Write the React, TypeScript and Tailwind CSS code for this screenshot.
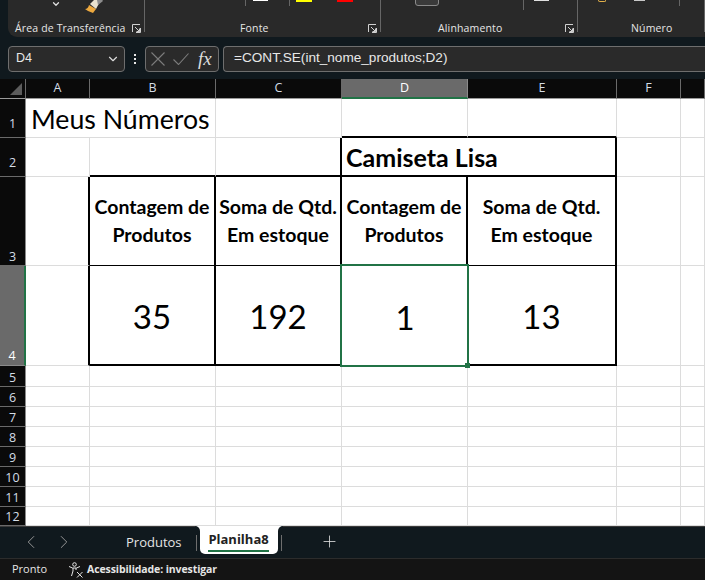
import React from "react";
import { ChevronDown, ChevronLeft, ChevronRight, Plus } from "lucide-react";

const ui = { fontFamily: '"Open Sans", "Noto Sans", sans-serif' };
const sheet = { fontFamily: 'Lato, "Open Sans", sans-serif' };

function Launcher({ className = "" }: { className?: string }) {
  return (
    <svg width="9" height="9" viewBox="0 0 9 9" fill="none" stroke="#d0d0d0" strokeWidth="1" className={className}>
      <path d="M0.5 8V0.5H8M8.5 4V8.5H4M3 3L7.5 7.5M7.5 4.5V7.5H4.5" />
    </svg>
  );
}

function Brush() {
  return (
    <svg width="20" height="14" viewBox="0 0 20 14" className="ml-[24px]">
      <path d="M5 4 L11 -2 L17 -2 L11 9 Z" fill="#e9e2cf" />
      <path d="M12 0 L16 -2 L18 1 L13 5 Z" fill="#8c8c8c" />
      <path d="M4 5 L11 9 L8 13 L3 11 L0 9 Q3 9 4 5 Z" fill="#eda93f" />
    </svg>
  );
}

function Group({
  w,
  label,
  ml,
  launcher,
  children,
}: {
  w: string;
  label: string;
  ml: string;
  launcher?: boolean;
  children?: React.ReactNode;
}) {
  return (
    <div className={`flex shrink-0 ${w}`}>
      <div className="flex flex-1 flex-col">
        <div className="flex h-[22px] items-start">{children}</div>
        <div className="flex h-[13px] items-center whitespace-nowrap text-[10.5px] tracking-[0.15px] text-[#e6e6e6]">
          <span className={ml}>{label}</span>
          {launcher && <Launcher className="ml-auto mr-[3px]" />}
        </div>
      </div>
      <div className="h-[32px] w-px bg-[#666666]" />
    </div>
  );
}

const base = "border-r border-b border-[#dcdcdc]";
const numCell = "flex items-center justify-center pt-[3px] text-[33px] text-black";
const headCell = "flex items-center justify-center text-center text-[19.5px] leading-[28px] font-bold text-black";

function ColHead({ t, active }: { t: string; active?: boolean }) {
  return (
    <div
      className={
        active
          ? "flex items-center justify-center border-r border-b-2 border-r-[#8a8a8a] border-b-[#217346] bg-[#6a6a6a] text-[12.5px] text-white"
          : "flex items-center justify-center border-r border-b border-r-[#6a6a6a] border-b-[#9a9a9a] bg-[#0a0a0a] text-[12.5px] text-[#d4dde6]"
      }
    >
      {t}
    </div>
  );
}

function RowHead({ t, pb, active }: { t: string; pb: string; active?: boolean }) {
  return (
    <div
      className={`flex items-end justify-center border-b text-[12.5px] leading-[16px] ${pb} ${
        active
          ? "border-r-2 border-r-[#217346] border-b-[#8a8a8a] bg-[#6a6a6a] text-white"
          : "border-r border-r-[#8a8a8a] border-b-[#6a6a6a] bg-[#0a0a0a] text-[#d4dde6]"
      }`}
    >
      {t}
    </div>
  );
}

const plainRows: [string, string][] = [
  ["5", "pb-0"],
  ["6", "pb-0"],
  ["7", "pb-0"],
  ["8", "pb-0"],
  ["9", "pb-0"],
  ["10", "pb-0"],
  ["11", "pb-0"],
  ["12", "pb-0"],
];

export default function App() {
  return (
    <div className="flex h-[580px] w-[705px] flex-col overflow-hidden bg-[#10191e]" style={ui}>
      {/* Ribbon */}
      <div className="ml-2 flex h-[37px] shrink-0 overflow-hidden rounded-bl-[9px] bg-[#292929]">
        <Group w="w-[137px]" label="Área de Transferência" ml="ml-[7px]" launcher>
          <ChevronDown size={10} strokeWidth={3} color="#e0e0e0" className="ml-[43px] -mt-[1px]" />
          <Brush />
        </Group>
        <Group w="w-[236px]" label="Fonte" ml="ml-[95px]" launcher>
          <div className="ml-[100px] h-[6px] w-px bg-[#666666]" />
          <div className="ml-[7px] h-px w-[15px] bg-white" />
          <div className="ml-[21px] h-[6px] w-px bg-[#666666]" />
          <div className="ml-[6px] h-[2px] w-[16px] bg-[#ffff00]" />
          <div className="ml-[25px] h-[2px] w-[16px] bg-[#ff0000]" />
        </Group>
        <Group w="w-[197px]" label="Alinhamento" ml="ml-[57px]" launcher>
          <div className="ml-[34px] -mt-[4px] h-[10px] w-[24px] rounded-[3px] border border-[#8a8a8a] bg-[#3a3a3a]" />
          <div className="ml-[84px] h-[10px] w-px bg-[#666666]" />
          <div className="ml-[10px] h-px w-[15px] bg-[#e0e0e0]" />
        </Group>
        <Group w="w-[127px]" label="Número" ml="ml-[53px]">
          <div className="ml-[20px] h-[2px] w-[8px] rounded-b-sm border-x border-b border-[#e2b04a]" />
          <div className="ml-[28px] h-px w-[11px] bg-[#c8c8c8]" />
          <div className="ml-[34px] h-[6px] w-px bg-[#666666]" />
        </Group>
      </div>

      {/* Formula bar */}
      <div className="flex h-[42px] shrink-0 items-center pl-2 pt-[1px]">
        <div
          className="flex h-[26px] w-[117px] items-center justify-between rounded-[4px] border border-[#6e6e6e] bg-[#2a2a2a] pl-[7px] pr-[4px] text-[12.5px] text-[#e8e8e8]"
          style={{ fontFamily: '"Liberation Sans", sans-serif' }}
        >
          <span>D4</span>
          <ChevronDown size={14} color="#dcdcdc" />
        </div>
        <div className="flex w-[20px] flex-col items-center gap-[2px]">
          <span className="h-[2px] w-[2px] bg-[#e8e8e8]" />
          <span className="h-[2px] w-[2px] bg-[#e8e8e8]" />
          <span className="h-[2px] w-[2px] bg-[#e8e8e8]" />
        </div>
        <div className="flex h-[26px] w-[74px] items-center rounded-[4px] border border-[#6e6e6e] bg-[#2a2a2a] pl-[5px]">
          <svg width="14" height="14" viewBox="0 0 14 14" fill="none" stroke="#7c7c7c" strokeWidth="1.1">
            <path d="M0.5 0.5L13.5 13.5M13.5 0.5L0.5 13.5" />
          </svg>
          <svg width="16" height="12" viewBox="0 0 16 12" fill="none" stroke="#7c7c7c" strokeWidth="1.1" className="ml-[8px]">
            <path d="M0.5 6.5L5.5 11.5L15.5 0.5" />
          </svg>
          <span className="ml-[9px] pr-[1px] text-[19px] italic leading-none text-[#dcdcdc]" style={{ fontFamily: '"Liberation Serif", serif' }}>
            fx
          </span>
        </div>
        <div
          className="ml-[4px] flex h-[26px] flex-1 items-center rounded-l-[4px] border-y border-l border-[#6e6e6e] bg-[#2a2a2a] pl-[10px] text-[13.6px] text-[#e8e8e8]"
          style={{ fontFamily: '"Liberation Sans", sans-serif' }}
        >
          =CONT.SE(int_nome_produtos;D2)
        </div>
      </div>

      {/* Sheet grid */}
      <div
        className="grid h-[447px] shrink-0 grid-cols-[26px_64px_126px_126px_126px_149px_64px_1fr] grid-rows-[20px_39px_39px_89px_100px_21px_20px_20px_20px_20px_20px_20px_19px] bg-white"
        style={{ fontFamily: '"Open Sans", sans-serif' }}
      >
        {/* header */}
        <div className="flex items-end justify-end border-r border-b border-r-[#6a6a6a] border-b-[#9a9a9a] bg-[#0a0a0a] pb-[3px] pr-[3px]">
          <svg width="12" height="12" viewBox="0 0 12 12">
            <path d="M12 0V12H0Z" fill="#5c5c5c" />
          </svg>
        </div>
        <ColHead t="A" />
        <ColHead t="B" />
        <ColHead t="C" />
        <ColHead t="D" active />
        <ColHead t="E" />
        <ColHead t="F" />
        <ColHead t="" />

        {/* row 1 */}
        <RowHead t="1" pb="pb-[5px]" />
        <div className="border-b border-[#dcdcdc]" style={sheet}>
          <div className="ml-[5px] mt-[2px] whitespace-nowrap text-[26.7px] leading-[36px] text-black">Meus Números</div>
        </div>
        <div className={base} />
        <div className={base} />
        <div className="border-r border-r-[#dcdcdc] border-b-2 border-b-black" />
        <div className="border-r border-r-[#dcdcdc] border-b-2 border-b-black" />
        <div className={base} />
        <div className={base} />

        {/* row 2 */}
        <RowHead t="2" pb="pb-[5px]" />
        <div className={base} />
        <div className="border-r border-r-[#dcdcdc] border-b-2 border-b-black" />
        <div className="border-r-2 border-b-2 border-black" />
        <div className="col-span-2 flex items-center border-r-2 border-b-2 border-black pl-[4px] pt-[3px] text-[25px] font-bold text-black" style={sheet}>
          Camiseta Lisa
        </div>
        <div className={base} />
        <div className={base} />

        {/* row 3 */}
        <RowHead t="3" pb="pb-0" />
        <div className="border-r-2 border-b border-r-black border-b-[#dcdcdc]" />
        <div className={`border-r-2 border-b border-black ${headCell}`} style={sheet}>
          Contagem de
          <br />
          Produtos
        </div>
        <div className={`border-r-2 border-b border-black ${headCell}`} style={sheet}>
          Soma de Qtd.
          <br />
          Em estoque
        </div>
        <div className={`border-r-2 border-b border-black ${headCell}`} style={sheet}>
          Contagem de
          <br />
          Produtos
        </div>
        <div className={`border-r-2 border-b border-black ${headCell}`} style={sheet}>
          Soma de Qtd.
          <br />
          Em estoque
        </div>
        <div className={base} />
        <div className={base} />

        {/* row 4 */}
        <RowHead t="4" pb="pb-[1px]" active />
        <div className="border-r-2 border-b border-r-black border-b-[#dcdcdc]" />
        <div className={`border-r-2 border-b-2 border-black ${numCell}`} style={sheet}>
          35
        </div>
        <div className={`border-r-2 border-b-2 border-black ${numCell}`} style={sheet}>
          192
        </div>
        <div className={`relative ${numCell}`} style={sheet}>
          1
          <div className="absolute -left-[2px] -top-[2px] h-[103px] w-[129px] border-2 border-[#217346]" />
          <div className="absolute -right-[2px] -bottom-[2px] h-[5px] w-[5px] bg-[#217346]" />
        </div>
        <div className={`border-r-2 border-b-2 border-black ${numCell}`} style={sheet}>
          13
        </div>
        <div className={base} />
        <div className={base} />

        {/* rows 5-12 */}
        {plainRows.map(([n, pb]) => (
          <React.Fragment key={n}>
            <RowHead t={n} pb={pb} />
            <div className={base} />
            <div className={base} />
            <div className={base} />
            <div className={base} />
            <div className={base} />
            <div className={base} />
            <div className={base} />
          </React.Fragment>
        ))}
      </div>

      {/* Sheet tabs */}
      <div className="flex h-[32px] shrink-0 items-start border-t border-[#3a3a3a] bg-[#10191e]">
        <ChevronLeft size={22} strokeWidth={1} color="#a0a0a0" className="ml-[20px] mt-[4px]" />
        <ChevronRight size={22} strokeWidth={1} color="#a0a0a0" className="ml-[11px] mt-[4px]" />
        <span className="ml-[51px] mt-[6px] text-[13px] leading-[18px] text-[#e4e4e4]">Produtos</span>
        <div className="ml-[14px] mt-[8px] h-[16px] w-px bg-[#6e6e6e]" />
        <div className="relative ml-[3px] -mt-px flex h-[28px] w-[78px] flex-col items-center rounded-b-[5px] bg-white">
          <div className="absolute -left-[5px] top-0 h-[5px] w-[5px] bg-white">
            <div className="h-full w-full rounded-tr-[5px] bg-[#10191e]" />
          </div>
          <div className="absolute -right-[5px] top-0 h-[5px] w-[5px] bg-white">
            <div className="h-full w-full rounded-tl-[5px] bg-[#10191e]" />
          </div>
          <span className="mt-[4px] text-[13px] font-bold leading-[18px] text-[#222]">Planilha8</span>
          <div className="mt-[2px] h-[2px] w-[61px] bg-[#217346]" />
        </div>
        <div className="ml-[3px] mt-[8px] h-[16px] w-px bg-[#6e6e6e]" />
        <Plus size={19} strokeWidth={1} color="#e8e8e8" className="ml-[38px] mt-[5px]" />
      </div>

      {/* Status bar */}
      <div className="flex h-[22px] flex-1 items-center border-t border-[#2c2c2c] bg-[#141414] text-[11px] text-[#e6e6e6]">
        <span className="ml-[12px]">Pronto</span>
        <svg width="16" height="16" viewBox="0 0 16 16" fill="none" stroke="#e6e6e6" strokeWidth="1" className="ml-[21px]">
          <circle cx="6.5" cy="2.5" r="1.8" />
          <path d="M1 4.5 L4.5 6 H8.5 L12 4.5 M5 6 V9 L3.5 14 M8 6 V8" />
          <path d="M9 10 L14.5 15.5 M14.5 10 L9 15.5" />
        </svg>
        <span className="ml-[3px] text-[10.5px] font-bold tracking-[-0.1px]">Acessibilidade: investigar</span>
      </div>
    </div>
  );
}
